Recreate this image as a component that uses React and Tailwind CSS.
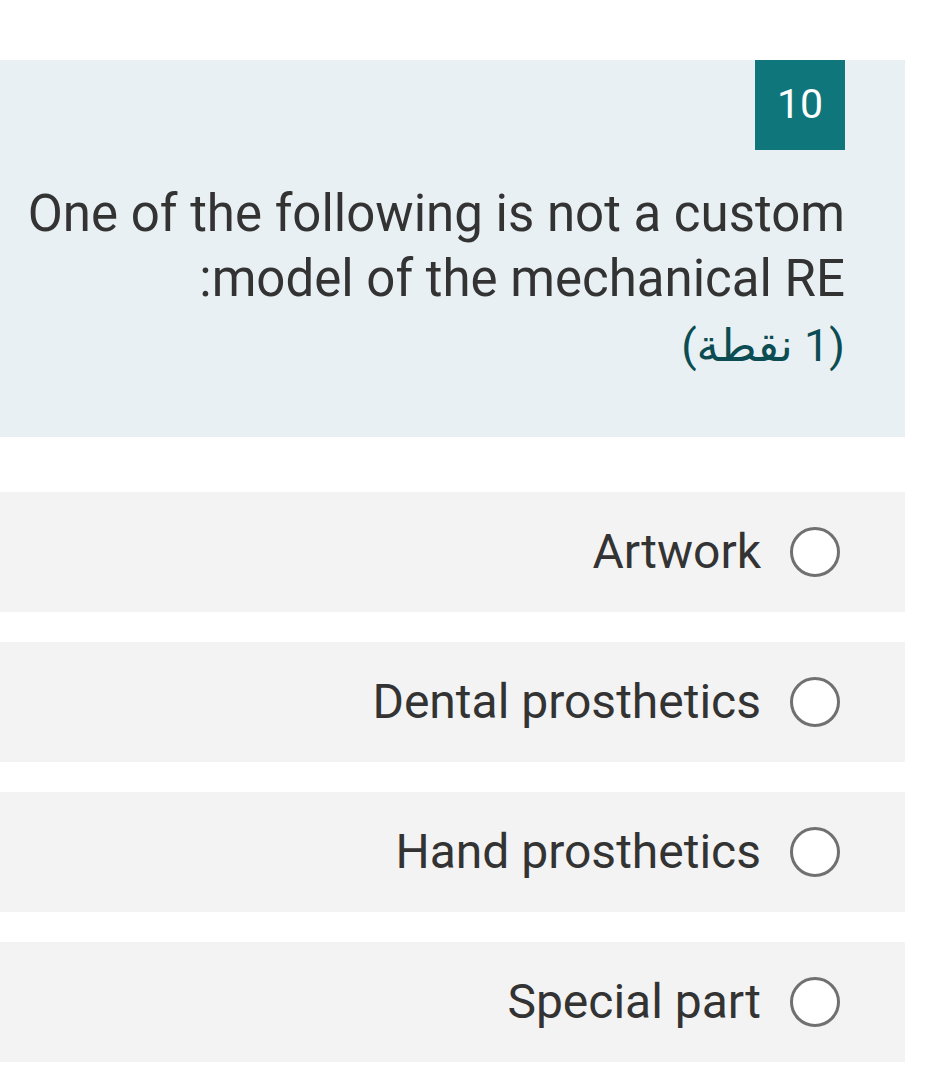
import React from 'react';

const options = ['Artwork', 'Dental prosthetics', 'Hand prosthetics', 'Special part'];

const App = () => {
  return (
    <div className="min-h-screen bg-white pt-[60px] w-[950px]" style={{ fontFamily: 'Roboto, "DejaVu Sans", sans-serif' }}>
      <div dir="rtl" className="w-[905px] h-[377px] bg-[#e8f0f3] pr-[60px]">
        <div className="w-[90px] h-[90px] bg-[#0f777b] text-white text-[41px] flex items-center justify-center">
          10
        </div>
        <div className="mt-[31px] text-[51px] leading-[65px] text-[#333333]">
          One of the following is not a custom model of the mechanical RE:
        </div>
        <div className="text-[45px] leading-[70px] text-[#0b4d52]">(1 نقطة)</div>
      </div>
      <div className="mt-[55px] flex flex-col gap-[30px]">
        {options.map((opt) => (
          <div key={opt} dir="rtl" className="w-[905px] h-[120px] bg-[#f3f3f3] flex items-center pr-[65px] gap-[29px]">
            <div className="w-[50px] h-[50px] rounded-full border-[3px] border-[#707070] bg-white shrink-0" />
            <span className="text-[48px] text-[#333333]">{opt}</span>
          </div>
        ))}
      </div>
    </div>
  );
};

export default App;
